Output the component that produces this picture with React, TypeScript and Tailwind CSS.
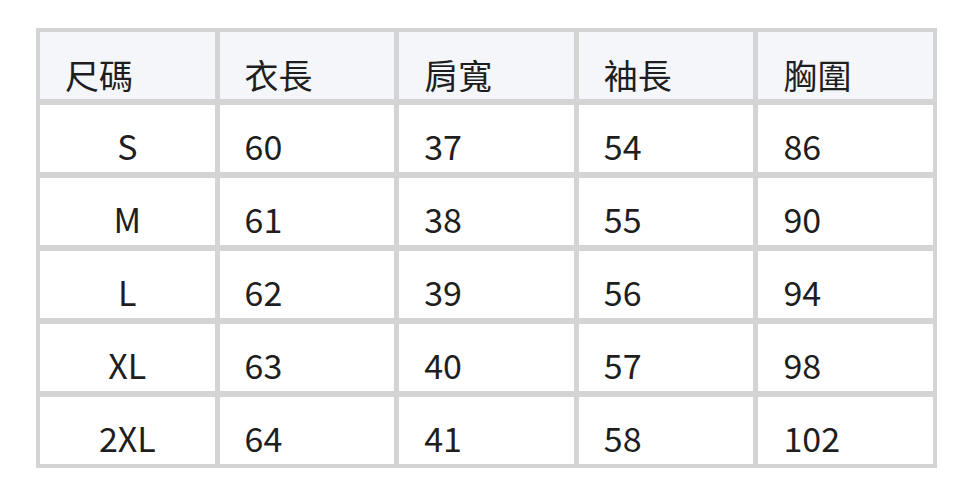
import React from "react";

const headers = ["尺碼", "衣長", "肩寬", "袖長", "胸圍"];
const rows = [
  ["S", "60", "37", "54", "86"],
  ["M", "61", "38", "55", "90"],
  ["L", "62", "39", "56", "94"],
  ["XL", "63", "40", "57", "98"],
  ["2XL", "64", "41", "58", "102"],
];

export default function App() {
  return (
    <div
      className="w-[972px] h-[495px] bg-white pt-[28px] pl-[36px]"
      style={{ fontFamily: '"Noto Sans CJK TC", "Noto Sans", sans-serif' }}
    >
      <div className="w-[901px] grid grid-cols-5 gap-x-[5px] gap-y-[6px] p-[4px] bg-[#d4d4d4] text-[34px] leading-[34px] text-[#1e1e1e]">
        {headers.map((h) => (
          <div key={h} className="h-[67px] bg-[#f5f6fa] pt-[26px] pl-[25px]">
            {h}
          </div>
        ))}
        {rows.map((r) =>
          r.map((c, i) => (
            <div
              key={r[0] + i}
              className={
                i === 0
                  ? "h-[67px] bg-white pt-[24px] text-center"
                  : "h-[67px] bg-white pt-[24px] pl-[25px]"
              }
            >
              {c}
            </div>
          ))
        )}
      </div>
    </div>
  );
}
